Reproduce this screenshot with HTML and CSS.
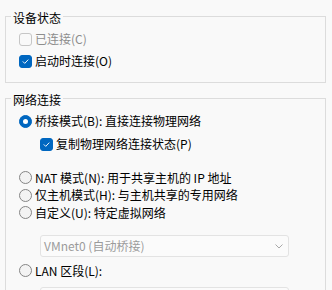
FILE: index.html
```html
<!DOCTYPE html>
<html>
<head>
    <title>网络适配器</title>
    <meta charset="UTF-8">
    <meta name="viewport" content="width=device-width, initial-scale=1.0">
    <link rel="stylesheet" href="styles.css">
</head>
<body>
    <div class="dialog">
        <fieldset class="group">
            <legend>设备状态</legend>
            <label class="option disabled">
                <span class="check"></span>
                <span>已连接(C)</span>
            </label>
            <label class="option">
                <span class="check checked">
                    <svg width="13" height="13" viewBox="0 0 13 13"><path d="M3.6 6.7 L5.6 8.7 L9.5 4.6" fill="none" stroke="#fff" stroke-width="1.1" stroke-linecap="round" stroke-linejoin="round"/></svg>
                </span>
                <span>启动时连接(O)</span>
            </label>
        </fieldset>

        <fieldset class="group">
            <legend>网络连接</legend>
            <label class="option">
                <span class="radio checked"></span>
                <span>桥接模式(B): 直接连接物理网络</span>
            </label>
            <label class="option sub">
                <span class="check checked">
                    <svg width="13" height="13" viewBox="0 0 13 13"><path d="M3.6 6.7 L5.6 8.7 L9.5 4.6" fill="none" stroke="#fff" stroke-width="1.1" stroke-linecap="round" stroke-linejoin="round"/></svg>
                </span>
                <span>复制物理网络连接状态(P)</span>
            </label>
            <div class="radio-list">
                <label class="option radio-row">
                    <span class="radio"></span>
                    <span>NAT 模式(N): 用于共享主机的 IP 地址</span>
                </label>
                <label class="option radio-row">
                    <span class="radio"></span>
                    <span>仅主机模式(H): 与主机共享的专用网络</span>
                </label>
                <label class="option radio-row">
                    <span class="radio"></span>
                    <span>自定义(U): 特定虚拟网络</span>
                </label>
            </div>
            <div class="select disabled">
                <span>VMnet0 (自动桥接)</span>
                <svg width="8" height="5" viewBox="0 0 8 5"><path d="M0.5 0.5 L4 4 L7.5 0.5" fill="none" stroke="#a8a8a8" stroke-width="1"/></svg>
            </div>
            <label class="option radio-row lan">
                <span class="radio"></span>
                <span>LAN 区段(L):</span>
            </label>
            <div class="select disabled last">
                <span></span>
                <svg width="8" height="5" viewBox="0 0 8 5"><path d="M0.5 0.5 L4 4 L7.5 0.5" fill="none" stroke="#a8a8a8" stroke-width="1"/></svg>
            </div>
        </fieldset>
    </div>
</body>
</html>
```

FILE: styles.css
```css
html, body {
    margin: 0;
    background: #f9f9f9;
    overflow: hidden;
}
body {
    font-family: "Noto Sans CJK SC", sans-serif;
    font-size: 12px;
    color: #000;
}
.dialog {
    padding: 7px 6px 0 5px;
}
.group {
    margin: 0;
    min-width: 0;
    border: 1px solid #dcdcdc;
    padding: 2px 0 10px 13px;
}
.group + .group {
    margin-top: 6px;
}
.group legend {
    margin-left: -8px;
    padding: 3px 2px 0;
    line-height: 16px;
}
.option {
    display: flex;
    align-items: center;
    gap: 3px;
    height: 22px;
    line-height: 16px;
    white-space: nowrap;
}
.option.disabled {
    color: #8d8d8d;
}
.sub {
    margin-left: 21px;
    margin-top: 1px;
}
.radio-list {
    margin-top: 14px;
}
.radio-row {
    height: 17.5px;
}
.check,
.radio {
    flex: none;
    width: 13px;
    height: 13px;
    box-sizing: border-box;
    display: flex;
    align-items: center;
    justify-content: center;
}
.check {
    border: 1px solid #8a8a8a;
    border-radius: 3px;
    background: #f5f5f5;
}
.disabled .check {
    border-color: #c6c6c6;
    background: #f9f9f9;
}
.check.checked {
    border-color: #0067c0;
    background: #0067c0;
}
.radio {
    border: 1px solid #858585;
    border-radius: 50%;
    background: #f3f3f3;
}
.radio.checked {
    border-color: #0067c0;
    background: #0067c0;
}
.radio.checked::after {
    content: "";
    width: 5px;
    height: 5px;
    border-radius: 50%;
    background: #fff;
}
.select {
    margin: 13.5px 0 0 21px;
    width: 249px;
    height: 22px;
    box-sizing: border-box;
    border: 1px solid #e3e3e3;
    border-radius: 3px;
    background: #fbfbfb;
    display: flex;
    align-items: center;
    justify-content: space-between;
    padding: 0 5px 0 3px;
    line-height: 16px;
}
.select.disabled {
    color: #9b9b9b;
}
.lan {
    margin-top: 5px;
}
.select.last {
    margin-top: 7px;
}
```
